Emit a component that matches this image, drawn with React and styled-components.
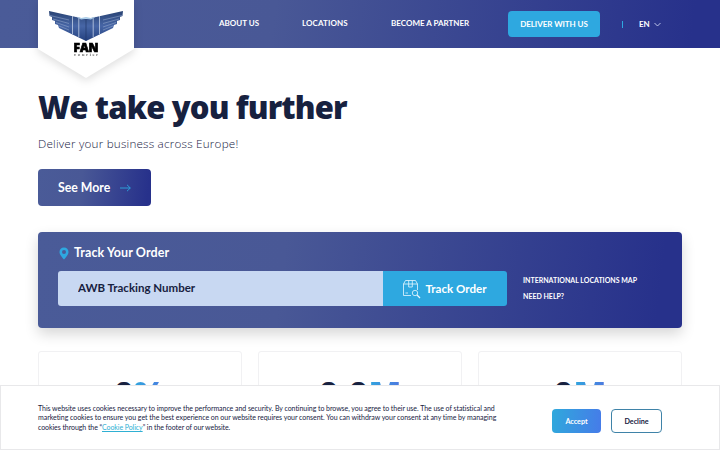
import React from 'react';
import styled, { createGlobalStyle } from 'styled-components';

const GlobalStyle = createGlobalStyle`
  * {
    box-sizing: border-box;
  }
  body {
    margin: 0;
    background: #fff;
    color: #17213f;
    font-family: Lato, "Open Sans", sans-serif;
    overflow: hidden;
  }
  h1, p {
    margin: 0;
  }
`;

const brandGradient = 'linear-gradient(97deg, #4a5b98 0%, #495896 38%, #27318b 96%)';

const Page = styled.div`
  height: 450px;
  overflow: hidden;
`;

const Header = styled.header`
  display: flex;
  align-items: flex-start;
  height: 48px;
  padding-left: 38px;
  background: ${brandGradient};
`;

const Logo = styled.a`
  flex: none;
  width: 96px;
  height: 78px;
  filter: drop-shadow(0 3px 4px rgba(0, 0, 0, 0.13));
  svg {
    display: block;
    overflow: visible;
  }
`;

const Nav = styled.nav`
  display: flex;
  align-items: center;
  height: 48px;
  margin-left: 85px;
`;

const NavLink = styled.a`
  width: ${({ $width }) => $width}px;
  padding-bottom: 2px;
  color: #fff;
  font-size: 8px;
  line-height: 12px;
  font-weight: 700;
  letter-spacing: ${({ $spacing }) => $spacing || 0}px;
  white-space: nowrap;
`;

const DeliverButton = styled.a`
  display: flex;
  align-items: center;
  justify-content: center;
  width: 92px;
  height: 26px;
  border-radius: 4px;
  background: #2ea8e0;
  color: #fff;
  font-size: 8px;
  font-weight: 700;
  letter-spacing: -0.05px;
  white-space: nowrap;
`;

const Divider = styled.span`
  width: 1px;
  height: 7px;
  margin: 0 16px 0 22px;
  background: #2ea8e0;
`;

const Language = styled.a`
  display: flex;
  align-items: center;
  gap: 4px;
  color: #fff;
  font-size: 8px;
  font-weight: 700;
`;

const Main = styled.main`
  padding: 39px 38px 0;
`;

const Title = styled.h1`
  height: 42px;
  font-family: "Open Sans", sans-serif;
  font-size: 31px;
  line-height: 40px;
  font-weight: 800;
  letter-spacing: -0.86px;
  white-space: nowrap;
`;

const Subtitle = styled.p`
  height: 18px;
  margin-top: 5px;
  font-family: "Open Sans", sans-serif;
  font-size: 11.7px;
  line-height: 18px;
  font-weight: 300;
  letter-spacing: 0.2px;
  color: #17213f;
  white-space: nowrap;
`;

const SeeMore = styled.a`
  display: flex;
  align-items: center;
  width: 113px;
  height: 37px;
  margin-top: 17px;
  padding-left: 20px;
  gap: 10px;
  border-radius: 4px;
  background: ${brandGradient};
  color: #fff;
  font-size: 12.3px;
  font-weight: 700;
`;

const Tracking = styled.section`
  height: 96px;
  margin-top: 26px;
  padding: 11px 20px 0;
  border-radius: 4px;
  background: ${brandGradient};
  box-shadow: 0 6px 14px rgba(0, 0, 0, 0.16);
`;

const TrackingTitle = styled.div`
  display: flex;
  align-items: center;
  height: 18px;
  gap: 4px;
  color: #fff;
  font-size: 12.5px;
  font-weight: 700;
  letter-spacing: 0.1px;
  svg {
    margin-top: 3px;
  }
`;

const TrackingRow = styled.div`
  display: flex;
  height: 35px;
  margin-top: 10px;
`;

const AwbInput = styled.input`
  width: 325px;
  padding: 0 20px 2px;
  border: 0;
  border-radius: 3px 0 0 3px;
  background: #c8d8f2;
  color: #17213f;
  font-family: inherit;
  font-size: 11.5px;
  font-weight: 700;
  outline: none;
  &::placeholder {
    color: #17213f;
    opacity: 1;
  }
`;

const TrackButton = styled.button`
  display: flex;
  align-items: center;
  justify-content: center;
  gap: 4px;
  width: 124px;
  padding: 0 1px 0 0;
  border: 0;
  border-radius: 0 3px 3px 0;
  background: #2ea8e0;
  color: #fff;
  font-family: inherit;
  font-size: 11.6px;
  font-weight: 700;
`;

const TrackingLinks = styled.div`
  display: flex;
  flex-direction: column;
  margin: 1px 0 0 16px;
`;

const TrackingLink = styled.a`
  height: 16px;
  color: #fff;
  font-size: 7px;
  line-height: 16px;
  font-weight: 700;
  white-space: nowrap;
`;

const Stats = styled.div`
  display: grid;
  grid-template-columns: repeat(3, 1fr);
  gap: 16px;
  margin-top: 23px;
`;

const StatCard = styled.div`
  height: 110px;
  padding-top: 20px;
  border: 1px solid #f1f1f3;
  border-radius: 3px;
  text-align: center;
  font-family: "Open Sans", sans-serif;
  font-size: 34px;
  line-height: 42px;
  font-weight: 800;
`;

const Unit = styled.span`
  background: linear-gradient(90deg, #2fa6de, #4f78e0);
  background-clip: text;
  color: transparent;
`;

const CookieBar = styled.aside`
  position: fixed;
  left: 0;
  right: 0;
  bottom: 0;
  display: flex;
  align-items: center;
  height: 65px;
  padding-left: 37px;
  padding-top: 7px;
  border: 1px solid #e8e8ea;
  background: #fff;
`;

const CookieText = styled.p`
  width: 514px;
  height: 35px;
  font-size: 7px;
  line-height: 9.75px;
  color: #17213f;
  white-space: nowrap;
`;

const CookieLine = styled.span`
  display: block;
  letter-spacing: ${({ $spacing }) => $spacing}px;
  a {
    color: #2fb0d3;
    text-decoration: underline;
  }
`;

const CookieButton = styled.button`
  width: ${({ $outline }) => ($outline ? 51 : 49)}px;
  height: 24px;
  margin-right: 10px;
  padding: 0;
  border: ${({ $outline }) => ($outline ? '1px solid #3f83a8' : '0')};
  border-radius: 4px;
  background: ${({ $outline }) => ($outline ? '#fff' : 'linear-gradient(97deg, #2fa9dc, #467be9)')};
  color: ${({ $outline }) => ($outline ? '#17213f' : '#fff')};
  font-family: inherit;
  font-size: 7.2px;
  font-weight: 700;
`;

function FanLogo() {
  return (
    <svg width="96" height="78" viewBox="0 0 96 78">
      <defs>
        <linearGradient id="wing" x1="0" y1="0" x2="0" y2="1">
          <stop offset="0" stopColor="#294373" />
          <stop offset="0.5" stopColor="#4766a6" />
          <stop offset="1" stopColor="#24417f" />
        </linearGradient>
      </defs>
      <path d="M0 0H96V49L48 78L0 49Z" fill="#fff" />
      <path d="M11 11L38 17L48 19L58 17L85 11L84.500 16L82 17L82 20L79 21L79 24L76 25L75 28L48 41L21 28L20 25L17 24L17 21L14 20L14 17L11.500 16Z" fill="url(#wing)" />
      <path d="M12 15.500L31 20M15 19L31 23.500M18 22.500L31 27M21 26L31 30M84 15.500L65 20M81 19L65 23.500M78 22.500L65 27M75 26L65 30" stroke="#9fb0d2" strokeWidth="0.5" />
      <path d="M34.500 16V34M40.800 18V37M55.200 18V37M61.500 16V34" stroke="#c3d0e6" strokeWidth="0.8" />
      <path d="M48 19V41" stroke="#1f3867" strokeWidth="0.7" />
      <path d="M38 16.500L43 18L48 17L53 18L58 16.500L53 19.500L48 18.700L43 19.500Z" fill="#a9cbe7" />
      <text x="35.500" y="51.800" textLength="25" lengthAdjust="spacingAndGlyphs" fontFamily="Open Sans, sans-serif" fontSize="11.500" fontWeight="800" fill="#000" stroke="#000" strokeWidth="0.7">FAN</text>
      <text x="36" y="55.800" textLength="24" fontFamily="Liberation Serif, serif" fontSize="5" fill="#222">courier</text>
    </svg>
  );
}

function ParcelIcon() {
  return (
    <svg width="19" height="20" viewBox="0 0 19 20" fill="none" stroke="#e9f7ff" strokeWidth="0.8">
      <path d="M9 16.500H1.500V5L3.500 1.500H13.500L15.500 5V11M1.500 5H15.500M6.700 1.500V8H10.300V1.500M3.500 14H6" />
      <circle cx="13" cy="14" r="2.700" />
      <path d="M15 16L18 19" strokeWidth="1.300" />
    </svg>
  );
}

export default function App() {
  return (
    <Page>
      <GlobalStyle />
      <Header>
        <Logo><FanLogo /></Logo>
        <Nav>
          <NavLink $width={83}>ABOUT US</NavLink>
          <NavLink $width={89} $spacing={0.1}>LOCATIONS</NavLink>
          <NavLink $width={117}>BECOME A PARTNER</NavLink>
          <DeliverButton>DELIVER WITH US</DeliverButton>
          <Divider />
          <Language>
            EN
            <svg width="7" height="5" viewBox="0 0 7 5" fill="none" stroke="#dfe6ff" strokeWidth="0.8">
              <path d="M0.500 1L3.500 4L6.500 1" />
            </svg>
          </Language>
        </Nav>
      </Header>
      <Main>
        <Title>We take you further</Title>
        <Subtitle>Deliver your business across Europe!</Subtitle>
        <SeeMore>
          See More
          <svg width="11" height="8" viewBox="0 0 11 8" fill="none" stroke="#2ea8e0" strokeWidth="0.9">
            <path d="M0 4H10.300M7 0.800L10.300 4L7 7.200" />
          </svg>
        </SeeMore>
        <Tracking>
          <TrackingTitle>
            <svg width="12" height="13" viewBox="0 0 12 13">
              <path fillRule="evenodd" d="M6 0.500C3.300 0.500 1.500 2.500 1.500 5C1.500 7.800 4.500 10.800 6 12.500C7.500 10.800 10.500 7.800 10.500 5C10.500 2.500 8.700 0.500 6 0.500ZM6 3A2 2 0 1 1 6 7A2 2 0 1 1 6 3Z" fill="#2ea8e0" />
            </svg>
            Track Your Order
          </TrackingTitle>
          <TrackingRow>
            <AwbInput placeholder="AWB Tracking Number" />
            <TrackButton>
              <ParcelIcon />
              Track Order
            </TrackButton>
            <TrackingLinks>
              <TrackingLink>INTERNATIONAL LOCATIONS MAP</TrackingLink>
              <TrackingLink>NEED HELP?</TrackingLink>
            </TrackingLinks>
          </TrackingRow>
        </Tracking>
        <Stats>
          <StatCard>0<Unit>%</Unit></StatCard>
          <StatCard>0.0<Unit>M</Unit></StatCard>
          <StatCard>0<Unit>M</Unit></StatCard>
        </Stats>
      </Main>
      <CookieBar>
        <CookieText>
          <CookieLine $spacing={-0.05}>
            This website uses cookies necessary to improve the performance and security. By continuing to browse, you agree to their use. The use of statistical and
          </CookieLine>
          <CookieLine $spacing={-0.035}>
            marketing cookies to ensure you get the best experience on our website requires your consent. You can withdraw your consent at any time by managing
          </CookieLine>
          <CookieLine $spacing={-0.07}>
            cookies through the “<a>Cookie Policy</a>” in the footer of our website.
          </CookieLine>
        </CookieText>
        <CookieButton>Accept</CookieButton>
        <CookieButton $outline>Decline</CookieButton>
      </CookieBar>
    </Page>
  );
}
